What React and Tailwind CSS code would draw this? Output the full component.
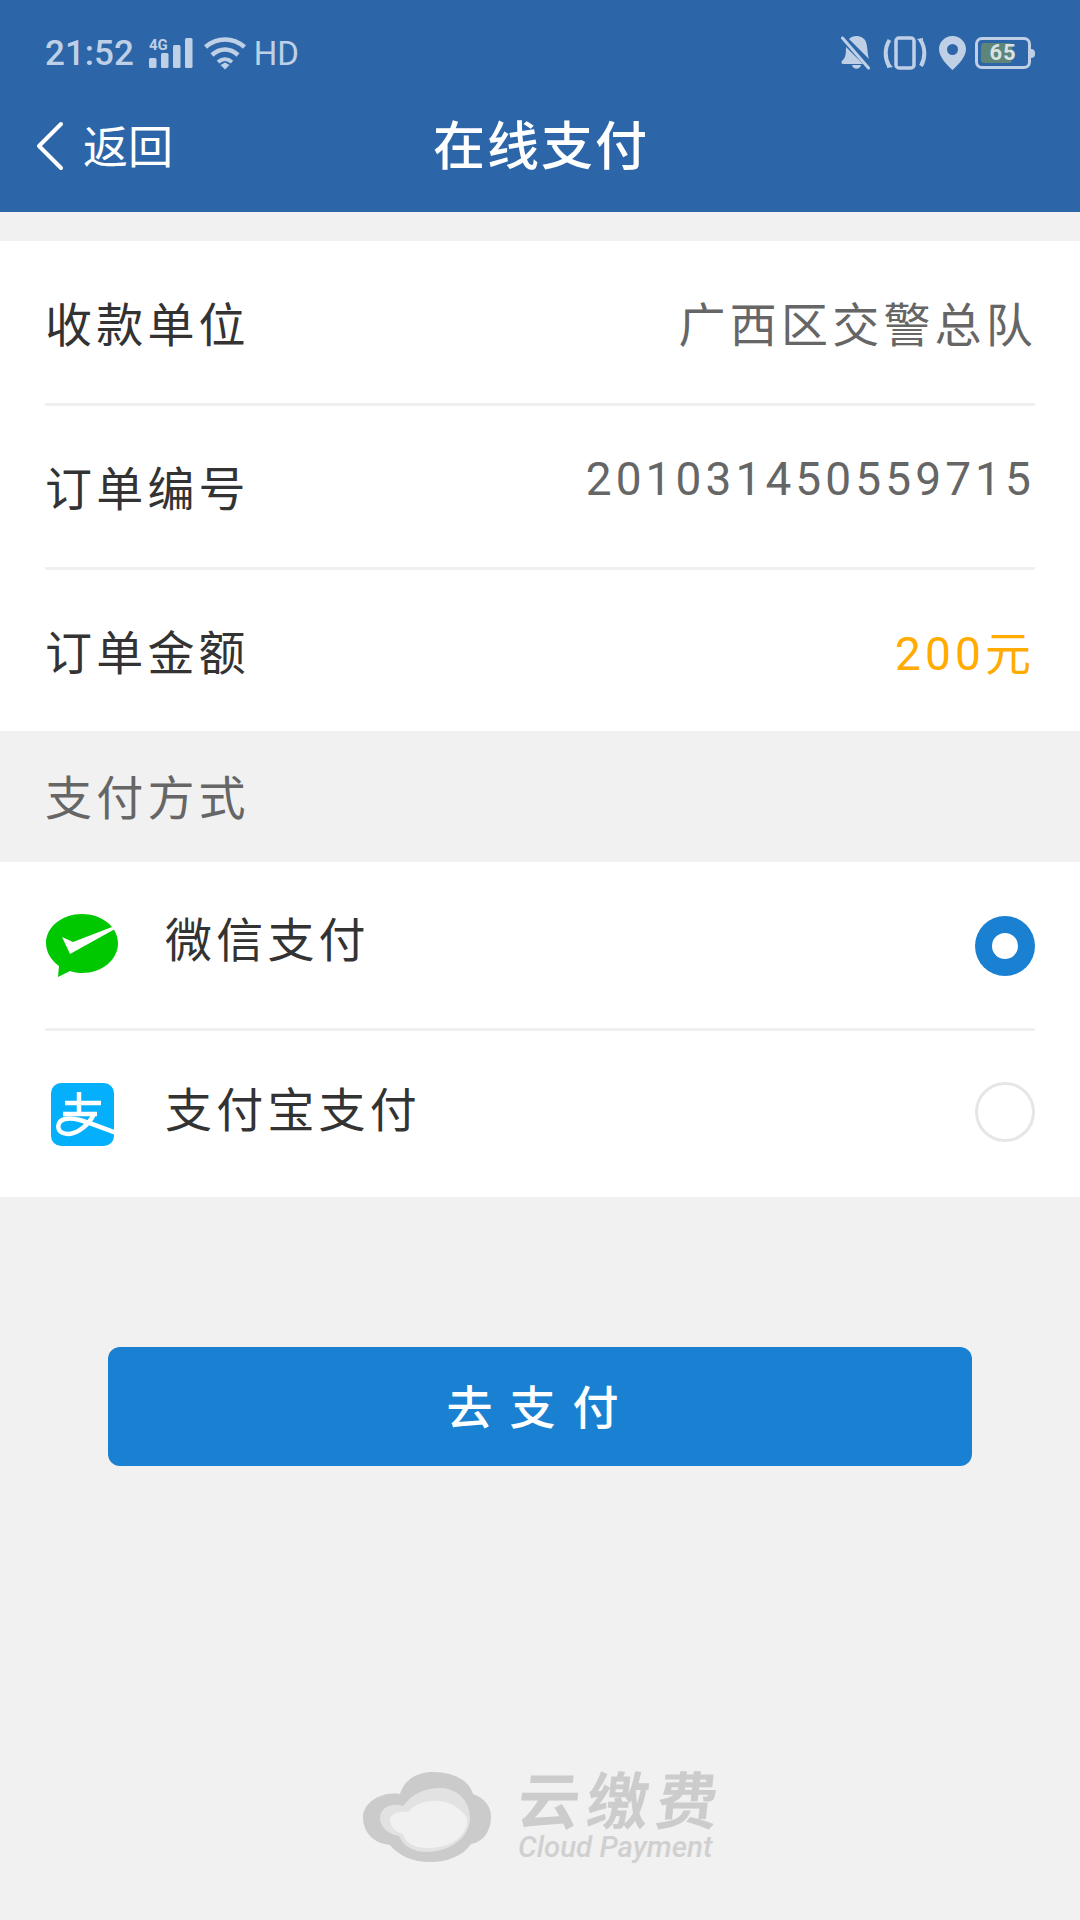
function StatusBar() {
  return (
    <div className="h-[106px] flex items-center justify-between pl-[45px] pr-[45px] text-[#bfd0e6]">
      <div className="flex items-center">
        <span className="text-[35px] leading-none font-medium">21:52</span>
        <svg width="44" height="35" viewBox="0 -4 44 35" className="ml-[15px] mb-[4px]" fill="currentColor">
          <text x="0" y="12" fontSize="15" fontWeight="700" fontFamily="Roboto, sans-serif">4G</text>
          <rect x="0" y="20" width="7.5" height="10" rx="1.500" />
          <rect x="12" y="15" width="7.5" height="15" rx="1.500" />
          <rect x="24" y="7" width="7.5" height="23" rx="1.500" />
          <rect x="36" y="0" width="7.5" height="30" rx="1.500" />
        </svg>
        <svg width="42" height="33" viewBox="0 0 42 33" className="ml-[11px]" fill="none" stroke="currentColor" strokeWidth="4.500">
          <path d="M1.500 10 C13 0 29 0 40.500 10" />
          <path d="M8 18 C16 10.500 26 10.500 34 18" />
          <path d="M14 25 C19 21 23 21 28 25" strokeWidth="4" />
          <path d="M16.500 28 L21 25.500 L25.500 28 L21 32.500 Z" fill="currentColor" stroke="none" />
        </svg>
        <span className="ml-[8px] text-[33px] leading-none">HD</span>
      </div>
      <div className="flex items-center">
        <svg width="29" height="34" viewBox="0 0 29 34" fill="currentColor">
          <path d="M8 3 C12 -1 20 -1 24 4 C27 9 26 17 28 23 L12 7 Z" />
          <path d="M5 11 L22 28 L2 28 C0 28 0 25 2 24 C5 21 5 16 5 11 Z" />
          <path d="M11 29 L20 29 C19 34 12 34 11 29 Z" />
          <path d="M1.500 2 L27.500 32" stroke="currentColor" strokeWidth="3" strokeLinecap="round" />
        </svg>
        <svg width="44" height="34" viewBox="0 0 44 34" className="ml-[13px]" fill="none" stroke="currentColor" strokeWidth="3.500">
          <rect x="13" y="2" width="18" height="30" rx="3" />
          <path d="M6.500 4 C1.500 12 1.500 22 6 30" strokeWidth="4" />
          <path d="M37.500 4 C42.500 12 42.500 22 38 30" strokeWidth="4" />
          <path d="M4 25 L4 32 L10 31 Z" fill="currentColor" stroke="none" />
          <path d="M40 9 L40 2 L34 3 Z" fill="currentColor" stroke="none" />
        </svg>
        <svg width="27" height="34" viewBox="0 0 27 34" className="ml-[12px]" fill="currentColor">
          <path fillRule="evenodd" d="M13.500 0 C21 0 27 6 27 13 C27 21 19 29 13.500 34 C8 29 0 21 0 13 C0 6 6 0 13.500 0 Z M13.500 8 A5.500 5.500 0 1 0 13.500 19 A5.500 5.500 0 1 0 13.500 8 Z" />
        </svg>
        <div className="ml-[9px] flex items-center">
          <div className="relative w-[56px] h-[32px] rounded-[7px] border-[3px] border-current">
            <div className="absolute left-[3px] top-[3px] bottom-[3px] w-[31px] rounded-[3px] bg-[#5f8478]" />
            <span className="absolute inset-0 flex items-center justify-center text-[22px] leading-none font-bold tracking-[1px] text-[#d8e2e4]">65</span>
          </div>
          <div className="w-[4px] h-[9px] rounded-r-[4px] bg-current" />
        </div>
      </div>
    </div>
  );
}

function Header() {
  return (
    <header className="h-[212px] bg-[#2c66a8]">
      <StatusBar />
      <div className="relative h-[84px] flex items-center justify-center">
        <div className="absolute left-[36px] top-0 bottom-0 flex items-center text-white">
          <svg width="28" height="50" viewBox="0 0 28 50" className="mb-[4px]" fill="none" stroke="currentColor" strokeWidth="4" strokeLinecap="round" strokeLinejoin="round">
            <path d="M25 3 L3 25 L25 47" />
          </svg>
          <span className="ml-[19px] text-[45px] leading-none">返回</span>
        </div>
        <h1 className="pl-[2px] text-[52px] leading-none font-medium text-white tracking-[2px]">在线支付</h1>
      </div>
    </header>
  );
}

function InfoRow({ label, value, height, last }) {
  return (
    <div className={`mx-[45px] flex items-center justify-between ${height} ${last ? '' : 'border-b-[3px] border-[#f0f0f0]'}`}>
      <span className="pt-[6px] text-[47px] leading-none text-[#333333] tracking-[4.2px]">{label}</span>
      {value}
    </div>
  );
}

function PayRow({ icon, label, height, textClass, radioClass, selected, last }) {
  return (
    <div className={`mx-[45px] flex items-center ${height} ${last ? '' : 'border-b-[3px] border-[#f0f0f0]'}`}>
      <div className="w-[72px] flex justify-center">{icon}</div>
      <span className={`ml-[48px] text-[47px] leading-none text-[#333333] tracking-[4.2px] ${textClass}`}>{label}</span>
      <div className={`ml-auto ${radioClass}`}>
        {selected ? (
          <div className="w-[60px] h-[60px] rounded-full bg-[#1a80d2] flex items-center justify-center">
            <div className="w-[26px] h-[26px] rounded-full bg-white" />
          </div>
        ) : (
          <div className="w-[60px] h-[60px] rounded-full border-[3px] border-[#e6e6e6]" />
        )}
      </div>
    </div>
  );
}

function WechatIcon() {
  return (
    <svg width="72" height="63" viewBox="0 0 72 63" className="mt-[1px] ml-[2px] shrink-0">
      <path d="M36 0 C56 0 72 13 72 29 C72 46 56 59 36 59 C32 59 28 58.500 24 57 L12 63 L13 52 C5 46 0 38 0 29 C0 13 16 0 36 0 Z" fill="#00c800" />
      <path d="M16 23 L27 28 L66 13 L69 15 L24 40 Z" fill="#ffffff" />
    </svg>
  );
}

function AlipayIcon() {
  return (
    <svg width="63" height="63" viewBox="0 0 63 63" className="ml-[3px]">
      <defs>
        <clipPath id="alipay-clip">
          <rect width="63" height="63" rx="10" />
        </clipPath>
      </defs>
      <rect width="63" height="63" rx="10" fill="#04b0fb" />
      <g clipPath="url(#alipay-clip)" fill="none" stroke="#ffffff" strokeWidth="4.500">
        <path d="M14 20 H50 M28 9 V31 M12 31 H46" />
        <path d="M43 31 C37 44 22 54 12 50 C5 47 6 38 14 36 C26 33 44 43 66 50" />
      </g>
    </svg>
  );
}

function CloudLogo() {
  return (
    <div className="flex items-center">
      <svg width="129" height="90" viewBox="0 0 129 90">
        <path d="M37 22 C42 6 56 0 70 0 C90 0 106 8 110 22 C122 26 129 36 128 47 C127 60 120 70 108 72 C100 84 84 90 67 90 C50 90 36 84 27 73 C10 71 0 60 0 45 C0 31 18 19 37 22 Z" fill="#cbcbcb" />
        <path d="M40 34 C50 20 66 15 80 16 C96 18 107 30 107 46 C107 66 86 80 64 80 C50 80 40 74 36 64 C24 62 17 54 17 46 C17 36 28 30 40 34 Z" fill="#e2e2e2" />
        <path d="M45 40 C55 28 75 26 88 32 C100 38 106 46 104 52 C100 68 84 76 64 76 C50 76 42 70 40 62 C32 60 27 54 27 48 C27 42 36 38 45 40 Z" fill="#f1f1f1" />
      </svg>
      <div className="ml-[26px] flex flex-col items-start">
        <span className="mt-[4px] -skew-x-6 text-[62px] leading-[56px] font-bold tracking-[7px] text-[#cccccc]">云缴费</span>
        <span className="text-[29.5px] leading-[32px] font-medium italic text-[#d0d0d0]">Cloud Payment</span>
      </div>
    </div>
  );
}

export default function App() {
  return (
    <div className="w-[1080px] h-[1920px] bg-[#f1f1f1] flex flex-col font-['Roboto','Noto_Sans_CJK_SC',sans-serif]">
      <Header />

      {/* Order info */}
      <section className="mt-[29px] bg-white">
        <InfoRow
          label="收款单位"
          height="h-[165px]"
          value={<span className="pt-[6px] -mr-[2px] text-[47px] leading-none tracking-[4.2px] text-[#666666]">广西区交警总队</span>}
        />
        <InfoRow
          label="订单编号"
          height="h-[164px]"
          value={<span className="pb-[16px] text-[46px] leading-none tracking-[4.1px] text-[#666666]">201031450559715</span>}
        />
        <InfoRow
          label="订单金额"
          height="h-[161px]"
          value={<span className="pt-[6px] text-[46px] leading-none tracking-[4.1px] text-[#ffab00]">200元</span>}
          last
        />
      </section>

      <div className="h-[131px] px-[45px] pt-[4px] flex items-center text-[47px] leading-none text-[#666666] tracking-[4.2px]">支付方式</div>

      {/* Pay methods */}
      <section className="bg-white">
        <PayRow icon={<WechatIcon />} label="微信支付" height="h-[169px]" textClass="mb-[10px]" radioClass="mt-[1px]" selected />
        <PayRow icon={<AlipayIcon />} label="支付宝支付" height="h-[166px]" textClass="mb-[8px]" radioClass="mb-[4px]" last />
      </section>

      <div className="mt-[150px] mx-[108px] h-[119px] pt-[3px] pl-[2px] rounded-[12px] bg-[#1a80d2] flex items-center justify-center text-[46px] leading-none font-medium text-white tracking-[17px]">去支付</div>

      <div className="mt-auto mb-[57px] pl-[8px] flex justify-center">
        <CloudLogo />
      </div>
    </div>
  );
}
